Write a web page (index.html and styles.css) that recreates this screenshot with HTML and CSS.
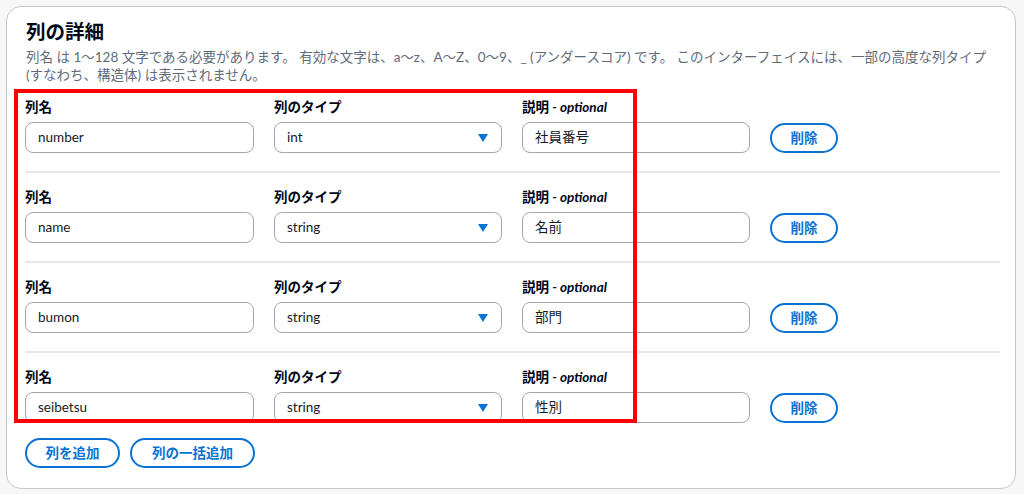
FILE: index.html
```html
<!DOCTYPE html>
<html lang="ja">
<head>
<meta charset="utf-8">
<title>列の詳細</title>
<link rel="stylesheet" href="styles.css">
</head>
<body>
<div class="page">
  <section class="card">
    <h2 class="title">列の詳細</h2>
    <p class="desc">列名 は 1〜128 文字である必要があります。 有効な文字は、a〜z、A〜Z、0〜9、_ (アンダースコア) です。 このインターフェイスには、一部の高度な列タイプ<br>(すなわち、構造体) は表示されません。</p>
    <div class="rows">
      <div class="row">
        <div class="field"><div class="label">列名</div><div class="input">number</div></div>
        <div class="field"><div class="label">列のタイプ</div><div class="input select">int<svg class="caret" width="10" height="8" viewBox="0 0 10 8"><path d="M0 0h10L5 8z"/></svg></div></div>
        <div class="field"><div class="label">説明 <i>- optional</i></div><div class="input">社員番号</div></div>
        <button class="btn">削除</button>
      </div>
      <div class="divider"></div>
      <div class="row">
        <div class="field"><div class="label">列名</div><div class="input">name</div></div>
        <div class="field"><div class="label">列のタイプ</div><div class="input select">string<svg class="caret" width="10" height="8" viewBox="0 0 10 8"><path d="M0 0h10L5 8z"/></svg></div></div>
        <div class="field"><div class="label">説明 <i>- optional</i></div><div class="input">名前</div></div>
        <button class="btn">削除</button>
      </div>
      <div class="divider"></div>
      <div class="row">
        <div class="field"><div class="label">列名</div><div class="input">bumon</div></div>
        <div class="field"><div class="label">列のタイプ</div><div class="input select">string<svg class="caret" width="10" height="8" viewBox="0 0 10 8"><path d="M0 0h10L5 8z"/></svg></div></div>
        <div class="field"><div class="label">説明 <i>- optional</i></div><div class="input">部門</div></div>
        <button class="btn">削除</button>
      </div>
      <div class="divider"></div>
      <div class="row">
        <div class="field"><div class="label">列名</div><div class="input">seibetsu</div></div>
        <div class="field"><div class="label">列のタイプ</div><div class="input select">string<svg class="caret" width="10" height="8" viewBox="0 0 10 8"><path d="M0 0h10L5 8z"/></svg></div></div>
        <div class="field"><div class="label">説明 <i>- optional</i></div><div class="input">性別</div></div>
        <button class="btn">削除</button>
      </div>
    </div>
    <div class="actions">
      <button class="btn">列を追加</button>
      <button class="btn">列の一括追加</button>
    </div>
    <div class="highlight"></div>
  </section>
</div>
</body>
</html>
```
FILE: styles.css
```css
* { box-sizing: border-box; }
html, body { margin: 0; padding: 0; }
body {
  background: #f7f7f8;
  font-family: "Lato", "Noto Sans CJK JP", sans-serif;
  color: #000716;
  width: 1024px;
  height: 494px;
  overflow: hidden;
}
.page { padding: 6px 8px 6px 6px; }
.card {
  position: relative;
  background: #fff;
  border: 1px solid #c6c6cd;
  border-radius: 15px;
  padding: 12px 15px 20px 18px;
}
.title {
  margin: 0;
  font-size: 19.5px;
  line-height: 26px;
  font-weight: 700;
  padding-left: 1px;
}
.desc {
  margin: 3px 0 0;
  font-size: 13.5px;
  line-height: 18px;
  color: #5f6b7a;
  padding-left: 1px;
}
.rows { margin-top: 13px; }
.row {
  display: grid;
  grid-template-columns: 229px 228px 228px auto;
  column-gap: 20px;
  align-items: end;
}
.label {
  font-size: 13.5px;
  line-height: 20px;
  font-weight: 700;
  margin-bottom: 5px;
}
.label i { font-style: italic; }
.input {
  height: 31px;
  border: 1px solid #a2a6ad;
  border-radius: 8px;
  padding: 0 12px;
  font-size: 13.5px;
  line-height: 29px;
  display: flex;
  align-items: center;
  justify-content: space-between;
  color: #16191f;
}
.caret { fill: #0972d3; margin-right: 1px; margin-top: 1px; }
.divider {
  height: 2px;
  background: #e6e8eb;
  margin: 18px 0 14px;
}
.btn {
  font-family: inherit;
  height: 30px;
  border: 2px solid #0972d3;
  border-radius: 16px;
  background: #fff;
  color: #0972d3;
  font-size: 13.5px;
  font-weight: 700;
  padding: 0 18px;
  line-height: 26px;
  justify-self: start;
}
.row .btn { margin-bottom: 0; width: 68px; padding: 0; }
.actions {
  margin-top: 15px;
  display: flex;
  gap: 10px;
}
.actions .btn { padding: 0 20px; }
.actions .btn:first-child { width: 95px; padding: 0; }
.highlight {
  position: absolute;
  left: 7px;
  top: 82px;
  width: 623px;
  height: 334px;
  border: 4px solid #ff0000;
  pointer-events: none;
}
```
